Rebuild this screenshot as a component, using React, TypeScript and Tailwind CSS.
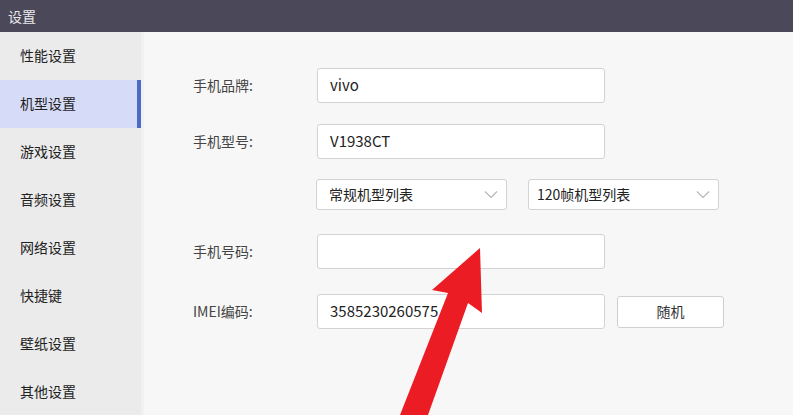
import React from "react";

const font = { fontFamily: '"Noto Sans CJK SC", "Noto Sans", sans-serif' };

const items = ["性能设置", "机型设置", "游戏设置", "音频设置", "网络设置", "快捷键", "壁纸设置", "其他设置"];

function Chevron() {
  return (
    <svg width="14" height="9" viewBox="0 0 14 9" fill="none">
      <path d="M1 1.5 L7 7.5 L13 1.5" stroke="#b5b5b5" strokeWidth="1.1" />
    </svg>
  );
}

export default function App() {
  return (
    <div className="relative w-[793px] h-[415px] overflow-hidden bg-[#f7f7f7] text-[#333]" style={font}>
      <div className="h-8 bg-[#4b4959] flex items-center px-2 text-[14px] text-[#e8e8ec]">设置</div>
      <div className="flex h-[383px]">
        <div className="w-[144px] bg-[#ebebeb] border-r-[3px] border-[#f1f1f1] flex flex-col">
          {items.map((t, i) => (
            <div
              key={t}
              className={
                "h-12 flex items-center pl-5 text-[14px] text-[#222] " +
                (i === 1 ? "bg-[#d6dbf8] border-r-[4px] border-[#4a6cc2]" : "")
              }
            >
              {t}
            </div>
          ))}
        </div>
        <div className="flex-1 pl-[49px] pt-9 flex flex-col text-[14px]">
          <div className="flex items-center h-[35px]">
            <div className="w-[124px] text-[#444]">手机品牌:</div>
            <div className="w-[288px] h-[35px] bg-white border border-[#d3d3d3] rounded-[3px] flex items-center pl-3 text-[15px] text-[#222]">vivo</div>
          </div>
          <div className="flex items-center h-[35px] mt-[21px]">
            <div className="w-[124px] text-[#444]">手机型号:</div>
            <div className="w-[288px] h-[35px] bg-white border border-[#d3d3d3] rounded-[3px] flex items-center pl-3 text-[15px] text-[#222]">V1938CT</div>
          </div>
          <div className="flex items-center h-[31px] mt-5 pl-[123px] gap-[21px]">
            <div className="w-[191px] h-[31px] bg-white border border-[#d3d3d3] rounded-[3px] flex items-center justify-between pl-3 pr-2 text-[14px] text-[#222]">
              <span>常规机型列表</span>
              <Chevron />
            </div>
            <div className="w-[191px] h-[31px] bg-white border border-[#d3d3d3] rounded-[3px] flex items-center justify-between pl-2 pr-2 text-[14px] text-[#222]">
              <span>120帧机型列表</span>
              <Chevron />
            </div>
          </div>
          <div className="flex items-center h-[35px] mt-6">
            <div className="w-[124px] text-[#444]">手机号码:</div>
            <div className="w-[288px] h-[35px] bg-white border border-[#d3d3d3] rounded-[3px]"></div>
          </div>
          <div className="flex items-center h-[35px] mt-[25px]">
            <div className="w-[124px] text-[#444]">IMEI编码:</div>
            <div className="w-[288px] h-[35px] bg-white border border-[#d3d3d3] rounded-[3px] flex items-center pl-3 text-[15px] text-[#222]">3585230260575</div>
            <div className="ml-[12px] w-[107px] h-[32px] bg-white border border-[#cfcfcf] rounded-[3px] flex items-center justify-center text-[14px] text-[#333]">随机</div>
          </div>
        </div>
      </div>
      <svg className="absolute left-0 top-0 pointer-events-none" width="793" height="415" viewBox="0 0 793 415">
        <polygon
          points="480,248 482,313 468,303 428,415 400,415 448,293 432,290"
          fill="#ec1c24"
        />
      </svg>
    </div>
  );
}
